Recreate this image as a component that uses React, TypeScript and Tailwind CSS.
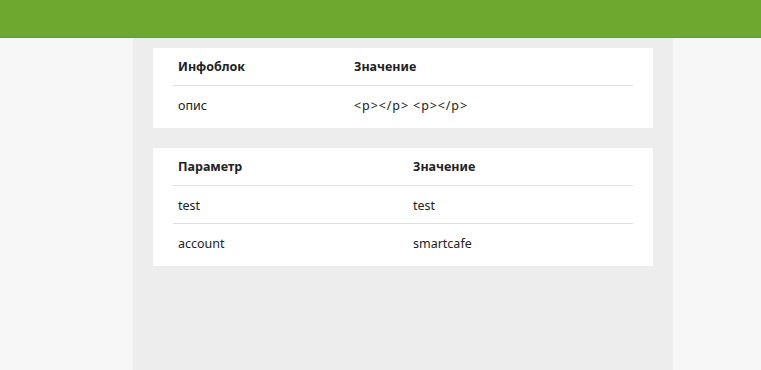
import React from "react";

type Row = [React.ReactNode, React.ReactNode];

function DataCard({
  head,
  rows,
  firstCol,
}: {
  head: Row;
  rows: Row[];
  firstCol: string;
}) {
  return (
    <div className="bg-white px-5 pb-1 text-[12.5px] text-[#222]">
      <div className="flex h-[38px] items-center border-b border-[#e0e0e0] pt-[2px] font-bold">
        <div className={`${firstCol} shrink-0 px-[5px]`}>{head[0]}</div>
        <div className="px-[5px]">{head[1]}</div>
      </div>
      {rows.map((r, i) => (
        <div
          key={i}
          className={`flex h-[38px] items-center pt-[3px] ${
            i < rows.length - 1 ? "border-b border-[#e0e0e0]" : ""
          }`}
        >
          <div className={`${firstCol} shrink-0 px-[5px]`}>{r[0]}</div>
          <div className="px-[5px]">{r[1]}</div>
        </div>
      ))}
    </div>
  );
}

export default function App() {
  return (
    <div
      className="min-h-[370px] bg-[#f7f7f7] flex flex-col"
      style={{ fontFamily: '"Noto Sans", "Open Sans", sans-serif' }}
    >
      <header className="h-[38px] bg-[#6fa82f] border-b border-[#62a01f] shrink-0" />
      <div className="flex flex-1">
        <div className="w-[133px] shrink-0" />
        <main className="w-[540px] bg-[#ededed] px-5 py-2.5 flex flex-col gap-5 min-h-[332px]">
          <DataCard
            firstCol="w-[176px]"
            head={["Инфоблок", "Значение"]}
            rows={[
              [
                "опис",
                <span className="tracking-[0.9px]">{"<p></p> <p></p>"}</span>,
              ],
            ]}
          />
          <DataCard
            firstCol="w-[235px]"
            head={["Параметр", "Значение"]}
            rows={[
              ["test", "test"],
              ["account", "smartcafe"],
            ]}
          />
        </main>
      </div>
    </div>
  );
}
